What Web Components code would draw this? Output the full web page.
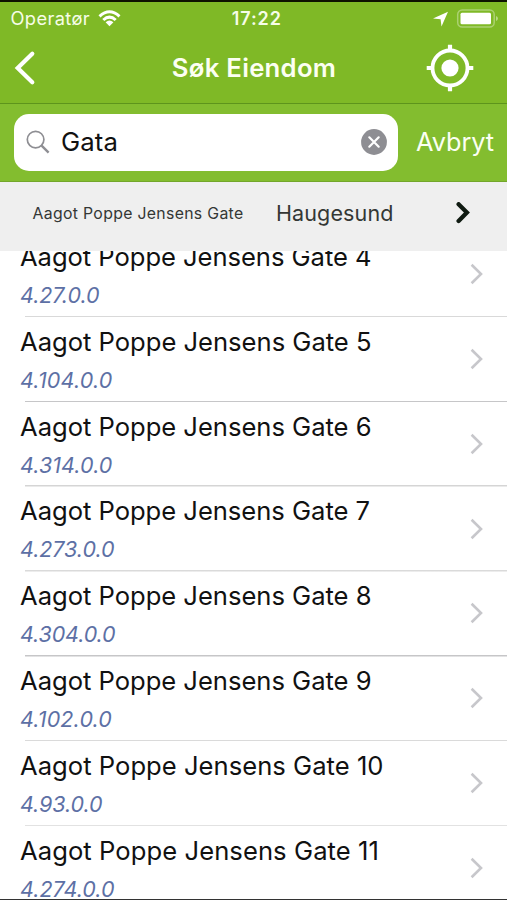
<!DOCTYPE html>
<html lang="no">
<head>
<meta charset="utf-8">
<title>Søk Eiendom</title>
<style>
body{margin:0;background:#fff;font-family:Inter,"Liberation Sans",sans-serif;overflow:hidden}
</style>
</head>
<body>
<property-search></property-search>
<script>
// Label whose tracking is adjusted so its text fills the given width.
class FitLabel extends HTMLElement{
  connectedCallback(){
    const r=this.attachShadow({mode:'open'});
    r.innerHTML='<style>:host{display:block;white-space:nowrap;flex:none}span{display:inline-block}</style><span></span>';
    const s=r.querySelector('span');
    const t=this.getAttribute('text');
    s.textContent=t;
    const w=parseFloat(this.getAttribute('fit'));
    const n=s.getBoundingClientRect().width;
    s.style.letterSpacing=((w-n)/t.length)+'px';
  }
}
customElements.define('fit-label',FitLabel);

class StatusBar extends HTMLElement{
  connectedCallback(){
    this.attachShadow({mode:'open'}).innerHTML=`<style>
    :host{display:grid;grid-template-columns:1fr auto 1fr;align-items:center;height:34px;padding:0 8px 0 10.5px;box-sizing:border-box;color:#f6fde8;font-size:18.3px;line-height:34px}
    .l,.r{display:flex;align-items:center}.r{justify-content:flex-end;gap:8px}
    .l{gap:8px}.l fit-label{line-height:32px;padding-bottom:2px}.time{font-weight:600;font-size:18px;padding-left:4px}svg{display:block}
    .l svg{margin-top:-2px}.r svg{margin-top:-1px}
    </style>
    <div class="l"><fit-label text="Operatør" fit="79.5"></fit-label>
    <svg width="23" height="17" viewBox="0 0 23 17"><g fill="none" stroke="#fff" stroke-width="3"><path d="M1.5 6.3Q11.5-2.7 21.5 6.3"/><path d="M5.3 10Q11.5 4.2 17.7 10"/></g><path d="M7.6 12.3Q11.5 8.9 15.4 12.3L11.5 16.2Z" fill="#fff"/></svg></div>
    <fit-label class="time" text="17:22" fit="50"></fit-label>
    <div class="r"><svg width="16" height="16" viewBox="0 0 16 16"><path d="M16 .7L9.5 15.5 8.6 8.2 1 7.6Z" fill="#fff"/></svg>
    <svg width="43" height="20" viewBox="0 0 43 20"><rect x="1.7" y="1" width="36.5" height="17" rx="4.5" fill="none" stroke="#fff" stroke-opacity=".35" stroke-width="1.5"/><rect x="4.5" y="3.8" width="30.5" height="11.5" rx="1.5" fill="#fff"/><path d="M40 7Q42 7.7 42 9.5T40 12Z" fill="#fff" fill-opacity=".45"/></svg></div>`;
  }
}
customElements.define('status-bar',StatusBar);

class NavBar extends HTMLElement{
  connectedCallback(){
    this.attachShadow({mode:'open'}).innerHTML=`<style>
    :host{display:grid;grid-template-columns:1fr auto 1fr;align-items:center;height:68px;padding:0 33px 3.5px 14px;box-sizing:border-box;border-bottom:1px solid #5d941c;color:#fcfff2}
    .t{font-size:25.7px;font-weight:600;line-height:63px;padding-left:20px}
    svg{display:block}.loc{justify-self:end;margin-top:-.5px}
    </style>
    <svg width="22" height="36" viewBox="0 0 22 36"><path d="M18.3 3.8L3.7 18 18.3 32.2" fill="none" stroke="#fff" stroke-width="4.2" stroke-linecap="round" stroke-linejoin="miter"/></svg>
    <fit-label class="t" text="Søk Eiendom" fit="164.5"></fit-label>
    <svg class="loc" width="48" height="48" viewBox="0 0 48 48"><circle cx="24" cy="24" r="17.5" fill="none" stroke="#fff" stroke-width="3.8"/><circle cx="24" cy="24" r="8.6" fill="#fff"/><path d="M24 .7V7M24 41V47.3M.7 24H7M41 24H47.3" stroke="#fff" stroke-width="4.2"/></svg>`;
  }
}
customElements.define('nav-bar',NavBar);

class SearchField extends HTMLElement{
  connectedCallback(){
    this.attachShadow({mode:'open'}).innerHTML=`<style>
    :host{display:flex;align-items:center;height:78px;padding:0 0 1px 13.5px;box-sizing:border-box;background:#83bd2f;border-bottom:1.5px solid #73a62b}
    .box{display:flex;align-items:center;width:384px;height:57px;box-sizing:border-box;padding:0 11px 1px 12.5px;background:#fff;border-radius:15px;color:#111}
    .q{font-size:25.7px;line-height:55px;flex:1;padding-left:10px}
    .c{font-size:25.3px;color:#fbfff2;margin-left:18.5px;line-height:55px;padding-bottom:2px}svg{display:block}
    .m{margin-top:1px}
    </style>
    <div class="box"><svg class="m" width="25" height="25" viewBox="0 0 25 25"><g fill="none" stroke="#8e8e93"><circle cx="9.6" cy="9.6" r="8.3" stroke-width="1.7"/><path d="M15.6 15.6L22.6 22.6" stroke-width="2.4"/></g></svg>
    <fit-label class="q" text="Gata" fit="57"></fit-label>
    <svg width="26" height="26" viewBox="0 0 26 26"><circle cx="13" cy="13" r="12.9" fill="#8e8e93"/><path d="M8.3 8.3L17.7 17.7M17.7 8.3L8.3 17.7" stroke="#fff" stroke-width="2.2" stroke-linecap="round"/></svg></div>
    <fit-label class="c" text="Avbryt" fit="78"></fit-label>`;
  }
}
customElements.define('search-field',SearchField);

class StreetBar extends HTMLElement{
  connectedCallback(){
    this.attachShadow({mode:'open'}).innerHTML=`<style>
    :host{display:flex;align-items:center;height:69px;padding:0 36px 8px 32.5px;box-sizing:border-box;background:#efefef;color:#343735}
    .s{font-size:15.8px;line-height:61px;padding-top:1px}.m{font-size:21.5px;line-height:61px;margin-left:32.5px;padding-top:1px}svg{display:block;margin-left:auto}
    </style>
    <fit-label class="s" text="Aagot Poppe Jensens Gate" fit="211"></fit-label>
    <fit-label class="m" text="Haugesund" fit="117.5"></fit-label>
    <svg width="16" height="22" viewBox="0 0 16 22"><path d="M3.6 2.2L11.9 10.6 3.6 19" fill="none" stroke="#101b12" stroke-width="4.3" stroke-linecap="round"/></svg>`;
  }
}
customElements.define('street-bar',StreetBar);

class AddressRow extends HTMLElement{
  connectedCallback(){
    this.attachShadow({mode:'open'}).innerHTML=`<style>
    :host{display:grid;grid-template-columns:1fr auto;height:84.83px;box-sizing:border-box;padding-left:20px;padding-right:22px;flex:none;
      background:linear-gradient(var(--line,#d9d9d9),var(--line,#d9d9d9)) 24.5px 100%/100% 1.5px no-repeat}
    .n{font-size:25.6px;line-height:34px;color:#111;padding-top:7.5px}
    .g{font-size:21.5px;line-height:30px;font-style:italic;color:#5d70a5;padding-top:6px}
    svg{display:block;align-self:center;margin-top:-1.5px}
    </style>
    <div><fit-label class="n" text="${this.getAttribute('name')}" fit="${this.getAttribute('nw')}"></fit-label>
    <fit-label class="g" text="${this.getAttribute('gnr')}" fit="${this.getAttribute('gw')}"></fit-label></div>
    <svg width="16" height="22" viewBox="0 0 16 22"><path d="M2.6 1.8L12 11 2.6 20.2" fill="none" stroke="#c7c7cb" stroke-width="2.6"/></svg>`;
  }
}
customElements.define('address-row',AddressRow);

class PropertySearch extends HTMLElement{
  connectedCallback(){
    const rows=[['4','4.27.0.0',351.5,79.5,'#d9d9d9'],['5','4.104.0.0',351.5,92.5,'#c6c6c8'],['6','4.314.0.0',351.5,92.5,'#d5d5d5'],['7','4.273.0.0',350,94.5,'#dadada'],['8','4.304.0.0',351.5,95.5,'#c6c6c8'],['9','4.102.0.0',351.5,92,'#dadada'],['10','4.93.0.0',363.5,82.5,'#e2e2e2'],['11','4.274.0.0',359,94.5,'#d9d9d9']];
    this.attachShadow({mode:'open'}).innerHTML=`<style>
    :host{display:flex;flex-direction:column;height:900px;box-sizing:border-box;border-top:2px solid #0d1300;border-bottom:1px solid #333;background:#fff;overflow:hidden}
    header{background:#7fb926;flex:none}
    main{flex:1;min-height:0;overflow:hidden;display:flex;flex-direction:column}
    address-row:first-child{margin-top:-18.6px}
    </style>
    <header><status-bar></status-bar><nav-bar></nav-bar><search-field></search-field></header>
    <street-bar></street-bar>
    <main>${rows.map(r=>`<address-row name="Aagot Poppe Jensens Gate ${r[0]}" gnr="${r[1]}" nw="${r[2]}" gw="${r[3]}" style="--line:${r[4]}"></address-row>`).join('')}</main>`;
  }
}
customElements.define('property-search',PropertySearch);
</script>
</body>
</html>
